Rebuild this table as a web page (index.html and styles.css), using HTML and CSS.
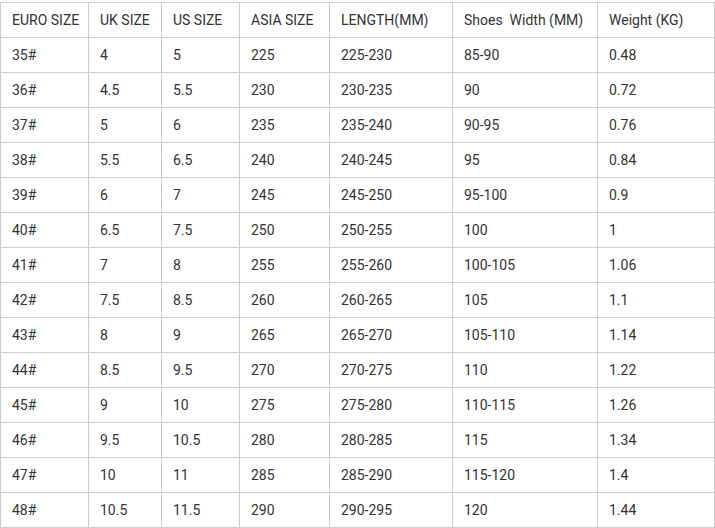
FILE: index.html
```html
<!DOCTYPE html>
<html>
<head>
<meta charset="utf-8">
<link rel="stylesheet" href="styles.css">
</head>
<body>
<table class="size-table">
<colgroup>
<col class="c1"><col class="c2"><col class="c3"><col class="c4"><col class="c5"><col class="c6"><col class="c7">
</colgroup>
<tbody>
<tr><td>EURO SIZE</td><td>UK SIZE</td><td>US SIZE</td><td>ASIA SIZE</td><td>LENGTH(MM)</td><td>Shoes&nbsp; Width (MM)</td><td>Weight (KG)</td></tr>
<tr><td>35#</td><td>4</td><td>5</td><td>225</td><td>225-230</td><td>85-90</td><td>0.48</td></tr>
<tr><td>36#</td><td>4.5</td><td>5.5</td><td>230</td><td>230-235</td><td>90</td><td>0.72</td></tr>
<tr><td>37#</td><td>5</td><td>6</td><td>235</td><td>235-240</td><td>90-95</td><td>0.76</td></tr>
<tr><td>38#</td><td>5.5</td><td>6.5</td><td>240</td><td>240-245</td><td>95</td><td>0.84</td></tr>
<tr><td>39#</td><td>6</td><td>7</td><td>245</td><td>245-250</td><td>95-100</td><td>0.9</td></tr>
<tr><td>40#</td><td>6.5</td><td>7.5</td><td>250</td><td>250-255</td><td>100</td><td>1</td></tr>
<tr><td>41#</td><td>7</td><td>8</td><td>255</td><td>255-260</td><td>100-105</td><td>1.06</td></tr>
<tr><td>42#</td><td>7.5</td><td>8.5</td><td>260</td><td>260-265</td><td>105</td><td>1.1</td></tr>
<tr><td>43#</td><td>8</td><td>9</td><td>265</td><td>265-270</td><td>105-110</td><td>1.14</td></tr>
<tr><td>44#</td><td>8.5</td><td>9.5</td><td>270</td><td>270-275</td><td>110</td><td>1.22</td></tr>
<tr><td>45#</td><td>9</td><td>10</td><td>275</td><td>275-280</td><td>110-115</td><td>1.26</td></tr>
<tr><td>46#</td><td>9.5</td><td>10.5</td><td>280</td><td>280-285</td><td>115</td><td>1.34</td></tr>
<tr><td>47#</td><td>10</td><td>11</td><td>285</td><td>285-290</td><td>115-120</td><td>1.4</td></tr>
<tr><td>48#</td><td>10.5</td><td>11.5</td><td>290</td><td>290-295</td><td>120</td><td>1.44</td></tr>
</tbody>
</table>
</body>
</html>
```
FILE: styles.css
```css
html, body {
  margin: 0;
  padding: 0;
  background: #fff;
}
body {
  padding-top: 2px;
  font-family: Roboto, "Liberation Sans", sans-serif;
  font-size: 14px;
  color: #333;
}
.size-table {
  border-collapse: collapse;
  table-layout: fixed;
  width: 714px;
}
.size-table td {
  border: 1px solid #ccc;
  padding: 0 0 1px 11px;
  box-sizing: border-box;
  height: 35px;
  vertical-align: middle;
  white-space: nowrap;
  line-height: 16px;
}
.c1 { width: 88px; }
.c2 { width: 73px; }
.c3 { width: 78px; }
.c4 { width: 90px; }
.c5 { width: 123px; }
.c6 { width: 145px; }
.c7 { width: 117px; }
```
